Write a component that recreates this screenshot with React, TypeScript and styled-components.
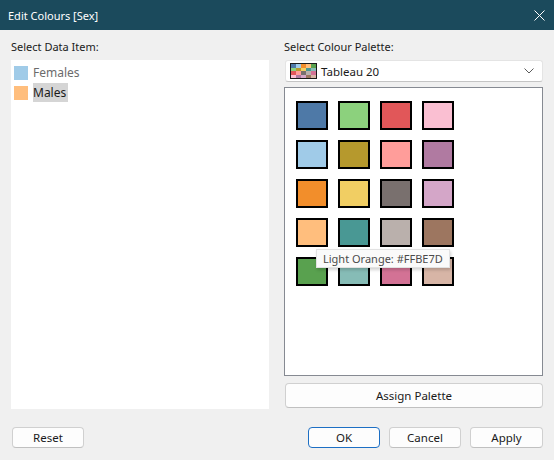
import React from "react";
import styled, { createGlobalStyle } from "styled-components";

const GlobalStyle = createGlobalStyle`
  html, body { margin: 0; padding: 0; background: #f0f0f0; }
  body { font-family: "Noto Sans", "Open Sans", sans-serif; }
  * { box-sizing: border-box; }
`;

const tableau20 = [
  "#4E79A7", "#A0CBE8", "#F28E2B", "#FFBE7D", "#59A14F",
  "#8CD17D", "#B6992D", "#F1CE63", "#499894", "#86BCB6",
  "#E15759", "#FF9D9A", "#79706E", "#BAB0AC", "#D37295",
  "#FABFD2", "#B07AA1", "#D4A6C8", "#9D7660", "#D7B5A6",
];

const Window = styled.div`
  width: 554px;
  height: 460px;
  display: flex;
  flex-direction: column;
  background: #f0f0f0;
  color: #1a1a1a;
  font-size: 11px;
`;

const TitleBar = styled.div`
  height: 30px;
  flex: none;
  background: #1b4a5c;
  color: #ffffff;
  display: flex;
  align-items: center;
  justify-content: space-between;
  padding: 0 9px 0 8px;
  font-size: 11px;
`;

const Body = styled.div`
  flex: 1;
  display: grid;
  grid-template-columns: 258px 259px;
  column-gap: 15px;
  padding: 9px 11px 0 11px;
`;

const Column = styled.div`
  display: flex;
  flex-direction: column;
`;

const Label = styled.div`
  height: 21px;
  line-height: 16px;
  font-size: 11px;
  color: #1a1a1a;
`;

const ListBox = styled.div`
  height: 349px;
  background: #ffffff;
  padding: 3px 0 0 3px;
  display: flex;
  flex-direction: column;
  gap: 1px;
`;

const ListItem = styled.div`
  display: flex;
  align-items: center;
  gap: 5px;
  height: 19px;
`;

const ItemSwatch = styled.span<{ $color: string }>`
  width: 14px;
  height: 14px;
  background: ${(p) => p.$color};
`;

const ItemText = styled.span<{ $selected?: boolean }>`
  font-size: 12px;
  line-height: 19px;
  padding: 0 2px 0 0;
  color: ${(p) => (p.$selected ? "#1a1a1a" : "#6b6b6b")};
  background: ${(p) => (p.$selected ? "#d5d5d5" : "transparent")};
`;

const Dropdown = styled.div`
  height: 22px;
  margin-left: 1px;
  background: #ffffff;
  border: 1px solid #e4e4e4;
  border-bottom-color: #c4c4c4;
  border-radius: 3px;
  display: flex;
  align-items: center;
  padding: 0 8px 0 4px;
  gap: 4px;
  font-size: 11.5px;
`;

const PaletteIcon = styled.div`
  width: 27px;
  height: 16px;
  border: 1px solid #1a1a1a;
  display: grid;
  grid-template-columns: repeat(5, 1fr);
  grid-template-rows: repeat(4, 1fr);
`;

const Cell = styled.span<{ $color: string }>`
  background: ${(p) => p.$color};
`;

const DropText = styled.span`
  flex: 1;
`;

const Panel = styled.div`
  position: relative;
  height: 289px;
  margin-top: 5px;
  background: #ffffff;
  border: 1px solid #868a92;
  padding: 13px 0 0 11px;
`;

const SwatchGrid = styled.div`
  display: grid;
  grid-template-columns: repeat(4, 32px);
  grid-template-rows: repeat(5, 29px);
  grid-auto-flow: column;
  column-gap: 10px;
  row-gap: 10px;
`;

const Swatch = styled.div<{ $color: string }>`
  background: ${(p) => p.$color};
  border: 2px solid #000000;
`;

const Tooltip = styled.div`
  position: absolute;
  left: 31px;
  top: 161px;
  height: 19px;
  padding: 0 6px;
  background: #fafafa;
  border: 1px solid #e2e2e2;
  box-shadow: 1px 2px 3px rgba(0, 0, 0, 0.18);
  color: #4a4a4a;
  font-size: 11px;
  line-height: 17px;
  white-space: nowrap;
`;

const Button = styled.button<{ $primary?: boolean; $width?: number }>`
  height: ${(p) => (p.$width ? "21px" : "25px")};
  width: ${(p) => (p.$width ? `${p.$width}px` : "auto")};
  font-family: inherit;
  font-size: 11.5px;
  color: #1a1a1a;
  background: #fdfdfd;
  border: 1px solid ${(p) => (p.$primary ? "#1d6fc4" : "#d0d0d0")};
  border-bottom-color: ${(p) => (p.$primary ? "#1d6fc4" : "#c0c0c0")};
  border-radius: 4px;
  padding: 0;
  display: flex;
  align-items: center;
  justify-content: center;
`;

const AssignButton = styled(Button)`
  margin-top: 7px;
  margin-left: 1px;
`;

const Footer = styled.div`
  height: 52px;
  flex: none;
  display: flex;
  align-items: flex-start;
  padding: 18px 11px 0 12px;
  gap: 9px;
`;

const Spacer = styled.div`
  flex: 1;
`;

const CloseIcon = () => (
  <svg width="11" height="11" viewBox="0 0 11 11">
    <path d="M0.5 0.5 L10.5 10.5 M10.5 0.5 L0.5 10.5" stroke="#ffffff" strokeWidth="1" />
  </svg>
);

const Chevron = () => (
  <svg width="10" height="6" viewBox="0 0 10 6">
    <path d="M0.5 0.5 L5 5 L9.5 0.5" stroke="#5a5a5a" strokeWidth="1" fill="none" />
  </svg>
);

export default function App() {
  const columns = [0, 1, 2, 3];
  const swatches: string[] = [];
  columns.forEach((c) => {
    for (let r = 0; r < 5; r++) swatches.push(tableau20[c * 5 + r]);
  });
  return (
    <>
      <GlobalStyle />
      <Window>
        <TitleBar>
          <span>Edit Colours [Sex]</span>
          <CloseIcon />
        </TitleBar>
        <Body>
          <Column>
            <Label>Select Data Item:</Label>
            <ListBox>
              <ListItem>
                <ItemSwatch $color="#A0CBE8" />
                <ItemText>Females</ItemText>
              </ListItem>
              <ListItem>
                <ItemSwatch $color="#FFBE7D" />
                <ItemText $selected>Males</ItemText>
              </ListItem>
            </ListBox>
          </Column>
          <Column>
            <Label>Select Colour Palette:</Label>
            <Dropdown>
              <PaletteIcon>
                {tableau20.map((c) => (
                  <Cell key={c} $color={c} />
                ))}
              </PaletteIcon>
              <DropText>Tableau 20</DropText>
              <Chevron />
            </Dropdown>
            <Panel>
              <SwatchGrid>
                {swatches.map((c) => (
                  <Swatch key={c} $color={c} />
                ))}
              </SwatchGrid>
              <Tooltip>Light Orange: #FFBE7D</Tooltip>
            </Panel>
            <AssignButton>Assign Palette</AssignButton>
          </Column>
        </Body>
        <Footer>
          <Button $width={72}>Reset</Button>
          <Spacer />
          <Button $width={72} $primary>OK</Button>
          <Button $width={72}>Cancel</Button>
          <Button $width={73}>Apply</Button>
        </Footer>
      </Window>
    </>
  );
}
